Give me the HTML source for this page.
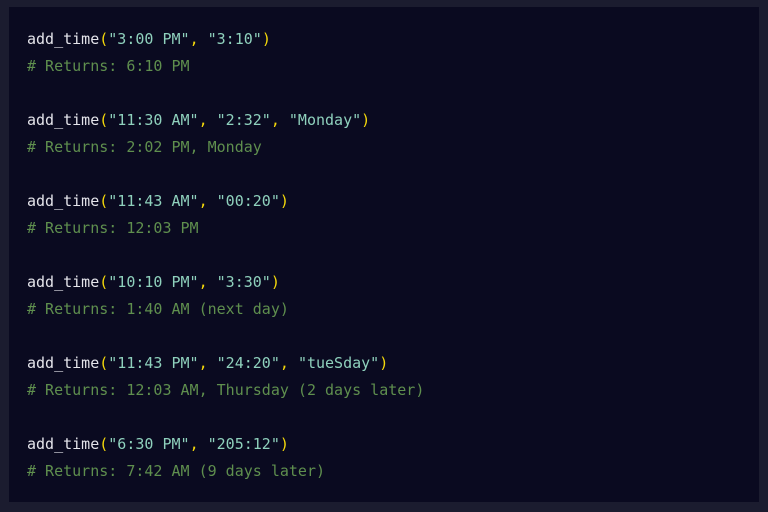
<!DOCTYPE html>
<html><head><meta charset="utf-8"><style>
html,body{margin:0;padding:0;width:768px;height:512px;background:#1b1c2f;overflow:hidden}
.p{position:absolute;left:9px;top:7px;width:750px;height:495px;background:#0a0a20}
pre{margin:0;position:absolute;left:27px;top:26px;font-family:"DejaVu Sans Mono","Liberation Mono",monospace;font-size:15px;line-height:27px;color:#e4e4ea}
.y{color:#f5d90a}.s{color:#8fd1bd}.c{color:#5f8f4e}
</style></head><body><div class="p"></div>
<pre>add_time<span class="y">(</span><span class="s">"3:00 PM"</span><span class="y">,</span> <span class="s">"3:10"</span><span class="y">)</span>
<span class="c"># Returns: 6:10 PM</span>

add_time<span class="y">(</span><span class="s">"11:30 AM"</span><span class="y">,</span> <span class="s">"2:32"</span><span class="y">,</span> <span class="s">"Monday"</span><span class="y">)</span>
<span class="c"># Returns: 2:02 PM, Monday</span>

add_time<span class="y">(</span><span class="s">"11:43 AM"</span><span class="y">,</span> <span class="s">"00:20"</span><span class="y">)</span>
<span class="c"># Returns: 12:03 PM</span>

add_time<span class="y">(</span><span class="s">"10:10 PM"</span><span class="y">,</span> <span class="s">"3:30"</span><span class="y">)</span>
<span class="c"># Returns: 1:40 AM (next day)</span>

add_time<span class="y">(</span><span class="s">"11:43 PM"</span><span class="y">,</span> <span class="s">"24:20"</span><span class="y">,</span> <span class="s">"tueSday"</span><span class="y">)</span>
<span class="c"># Returns: 12:03 AM, Thursday (2 days later)</span>

add_time<span class="y">(</span><span class="s">"6:30 PM"</span><span class="y">,</span> <span class="s">"205:12"</span><span class="y">)</span>
<span class="c"># Returns: 7:42 AM (9 days later)</span></pre>
</body></html>
